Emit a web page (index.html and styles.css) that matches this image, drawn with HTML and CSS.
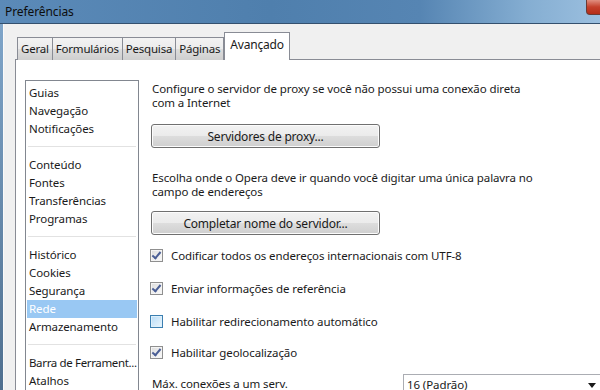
FILE: index.html
```html
<!DOCTYPE html>
<html lang="pt">
<head>
  <meta charset="UTF-8">
  <title>Preferências</title>
  <link rel="stylesheet" href="styles.css">
</head>
<body>

  <!-- Title Bar -->
  <div class="titlebar">
    <span class="title">Preferências</span>
    <span class="close"></span>
  </div>

  <div class="window">
    <div class="frame"></div>
    <div class="client">

      <!-- Tabs -->
      <div class="tabs">
        <div class="tab">Geral</div>
        <div class="tab">Formulários</div>
        <div class="tab">Pesquisa</div>
        <div class="tab">Páginas</div>
        <div class="tab active">Avançado</div>
      </div>

      <div class="panel">
        <!-- Section List -->
        <div class="list">
          <div class="item">Guias</div>
          <div class="item">Navegação</div>
          <div class="item">Notificações</div>
          <div class="sep"></div>
          <div class="item">Conteúdo</div>
          <div class="item">Fontes</div>
          <div class="item">Transferências</div>
          <div class="item">Programas</div>
          <div class="sep"></div>
          <div class="item">Histórico</div>
          <div class="item">Cookies</div>
          <div class="item">Segurança</div>
          <div class="item selected">Rede</div>
          <div class="item">Armazenamento</div>
          <div class="sep"></div>
          <div class="item tight">Barra de Ferrament...</div>
          <div class="item">Atalhos</div>
        </div>

        <!-- Network Settings -->
        <div class="content">
          <p class="text">Configure o servidor de proxy se você não possui uma conexão direta com a Internet</p>
          <button class="button">Servidores de proxy...</button>

          <p class="text second">Escolha onde o Opera deve ir quando você digitar uma única palavra no campo de endereços</p>
          <button class="button second">Completar nome do servidor...</button>

          <div class="checks">
            <label class="check"><span class="box checked"></span>Codificar todos os endereços internacionais com UTF-8</label>
            <label class="check"><span class="box checked"></span>Enviar informações de referência</label>
            <label class="check"><span class="box hover"></span>Habilitar redirecionamento automático</label>
            <label class="check"><span class="box checked"></span>Habilitar geolocalização</label>
          </div>

          <div class="row">
            <span class="row-label">Máx. conexões a um serv.</span>
            <div class="select">16 (Padrão)<span class="arrow"></span></div>
          </div>
        </div>
      </div>

    </div>
  </div>

</body>
</html>
```

FILE: styles.css
```css
body {
  margin: 0;
  width: 600px;
  height: 390px;
  overflow: hidden;
  font-family: "Noto Sans", sans-serif;
  font-size: 11.5px;
  letter-spacing: -0.1px;
  color: #1a1a1a;
  background: #f0f0f0;
}

/* Title Bar */
.titlebar {
  height: 23px;
  display: flex;
  align-items: center;
  justify-content: space-between;
  background: linear-gradient(90deg, #5b8ab8 0%, #4f7fad 45%, #5685b3 70%, #85aed2 88%, #9bbfdf 100%);
  border-bottom: 1px solid #34506e;
}

.title {
  padding-left: 5px;
  font-size: 12px;
  color: #0d0d0d;
}

.close {
  width: 14px;
  height: 14px;
  align-self: flex-start;
  margin-right: -2px;
  background: linear-gradient(#e08f80, #c4402b 50%, #b42d18);
  border: 1px solid #6b3a34;
  border-top: none;
  border-radius: 0 0 0 4px;
}

/* Window */
.window {
  display: flex;
  height: 366px;
}

.frame {
  width: 3px;
  background: linear-gradient(#7fa5c9, #4f6f8f);
  border-right: 1px solid #fafafa;
}

.client {
  flex: 1;
  padding: 9px 0 0 11px;
  display: flex;
  flex-direction: column;
}

/* Tabs */
.tabs {
  display: flex;
  align-items: flex-end;
  padding-left: 2px;
  height: 27px;
  position: relative;
  z-index: 2;
}

.tab {
  height: 22px;
  line-height: 22px;
  padding: 0 3px;
  margin-right: -1px;
  letter-spacing: -0.2px;
  background: linear-gradient(#f3f3f3, #ebebeb 50%, #dddddd 51%, #cfcfcf);
  border: 1px solid #898c95;
  border-bottom: none;
}

.tab.active {
  height: 27px;
  line-height: 24px;
  padding: 0 5px;
  background: #fff;
  margin-left: 1px;
  font-size: 12px;
}

.panel {
  flex: 1;
  display: flex;
  background: #fff;
  border-top: 1px solid #898c95;
  border-left: 1px solid #898c95;
  margin-top: -1px;
}

/* Section List */
.list {
  width: 110px;
  margin: 20px 0 0 9px;
  padding: 3px 1px 0;
  border: 1px solid #828790;
  border-bottom: none;
}

.item {
  height: 18px;
  line-height: 18px;
  padding-left: 2px;
  white-space: nowrap;
  overflow: hidden;
}

.item.tight {
  letter-spacing: -0.35px;
}

.item.selected {
  background: #99c8f3;
  color: #fff;
}

.sep {
  height: 1px;
  margin: 8px 1px 9px;
  background: #e2e2e2;
}

/* Content */
.content {
  padding: 22px 0 0 13px;
  flex: 1;
}

.text {
  margin: 0;
  width: 386px;
  line-height: 14px;
}

.text.second {
  margin-top: 23px;
}

.button {
  display: block;
  width: 229px;
  height: 24px;
  margin-top: 14px;
  margin-left: -1px;
  font-family: inherit;
  font-size: 12px;
  letter-spacing: -0.2px;
  color: #1a1a1a;
  background: linear-gradient(#f2f2f2, #ebebeb 50%, #dddddd 51%, #cfcfcf);
  border: 1px solid #707070;
  border-radius: 3px;
  box-shadow: inset 0 0 0 1px #fcfcfc;
}

.button.second {
  margin-top: 12px;
}

/* Checkboxes */
.checks {
  margin-top: 4px;
}

.check {
  display: flex;
  align-items: center;
  height: 33px;
  margin-left: -2px;
}

.check:nth-child(4) {
  height: 29px;
}

.box {
  width: 11px;
  height: 11px;
  margin-right: 8px;
  border: 1px solid #8f8f8f;
  background: linear-gradient(135deg, #dcdcdc, #fbfbfb);
  box-shadow: inset 0 0 0 1px #f4f4f4;
  position: relative;
}

.box.hover {
  border-color: #3c7fb1;
  background: linear-gradient(135deg, #b9dcf7, #eaf6fd);
  box-shadow: inset 0 0 0 1px #def0fb;
}

.box.checked::after {
  content: "";
  position: absolute;
  left: 3px;
  top: 0;
  width: 3px;
  height: 7px;
  border: solid #4a5e95;
  border-width: 0 2px 2px 0;
  transform: rotate(40deg);
}

/* Max connections */
.row {
  display: flex;
  align-items: flex-start;
  margin-top: 7px;
}

.row-label {
  width: 251px;
  padding-top: 2px;
}

.select {
  flex: 1;
  height: 20px;
  padding-left: 3px;
  line-height: 20px;
  border: 1px solid #abadb3;
  border-right: none;
  display: flex;
  justify-content: space-between;
  align-items: center;
}

.arrow {
  width: 0;
  height: 0;
  margin-right: 4px;
  border-left: 4px solid transparent;
  border-right: 4px solid transparent;
  border-top: 5px solid #1a1a1a;
}
```
